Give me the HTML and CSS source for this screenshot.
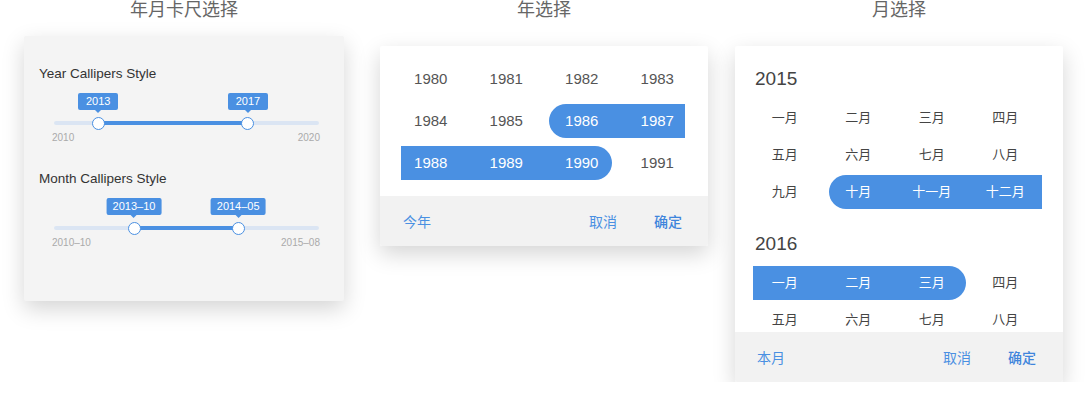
FILE: index.html
```html
<!DOCTYPE html>
<html lang="zh-CN">
<head>
<meta charset="UTF-8">
<meta name="viewport" content="width=device-width, initial-scale=1.0">
<title>年月选择</title>
<link rel="stylesheet" href="styles.css">
</head>
<body>
    <div class="board">
        <!-- 卡尺 -->
        <div class="col col-caliper">
            <h2 class="col-title">年月卡尺选择</h2>
            <div class="card card-caliper">
                <div class="caliper">
                    <div class="caliper-title">Year Callipers Style</div>
                    <div class="caliper-rail">
                        <div class="caliper-track"></div>
                        <div class="caliper-fill" style="left: 16.7%; width: 56.5%"></div>
                        <div class="caliper-tip" style="left: 16.7%">2013</div>
                        <div class="caliper-tip" style="left: 73.2%">2017</div>
                        <div class="caliper-thumb" style="left: 16.7%"></div>
                        <div class="caliper-thumb" style="left: 73.2%"></div>
                    </div>
                    <div class="caliper-ends"><span>2010</span><span>2020</span></div>
                </div>
                <div class="caliper caliper-next">
                    <div class="caliper-title">Month Callipers Style</div>
                    <div class="caliper-rail">
                        <div class="caliper-track"></div>
                        <div class="caliper-fill" style="left: 30.2%; width: 39.3%"></div>
                        <div class="caliper-tip" style="left: 30.2%">2013–10</div>
                        <div class="caliper-tip" style="left: 69.5%">2014–05</div>
                        <div class="caliper-thumb" style="left: 30.2%"></div>
                        <div class="caliper-thumb" style="left: 69.5%"></div>
                    </div>
                    <div class="caliper-ends"><span>2010–10</span><span>2015–08</span></div>
                </div>
            </div>
        </div>

        <!-- 年选择 -->
        <div class="col col-year">
            <h2 class="col-title">年选择</h2>
            <div class="card">
                <div class="years">
                    <div class="cell">1980</div>
                    <div class="cell">1981</div>
                    <div class="cell">1982</div>
                    <div class="cell">1983</div>
                    <div class="cell">1984</div>
                    <div class="cell">1985</div>
                    <div class="cell on cap-start">1986</div>
                    <div class="cell on cut-end">1987</div>
                    <div class="cell on cut-start">1988</div>
                    <div class="cell on">1989</div>
                    <div class="cell on cap-end">1990</div>
                    <div class="cell">1991</div>
                </div>
                <div class="card-foot">
                    <a class="foot-left">今年</a>
                    <div class="foot-actions">
                        <a>取消</a>
                        <a class="ok">确定</a>
                    </div>
                </div>
            </div>
        </div>

        <!-- 月选择 -->
        <div class="col col-month">
            <h2 class="col-title">月选择</h2>
            <div class="card">
                <div class="months-scroll">
                    <div class="month-year">2015</div>
                    <div class="months">
                        <div class="cell">一月</div>
                        <div class="cell">二月</div>
                        <div class="cell">三月</div>
                        <div class="cell">四月</div>
                        <div class="cell">五月</div>
                        <div class="cell">六月</div>
                        <div class="cell">七月</div>
                        <div class="cell">八月</div>
                        <div class="cell">九月</div>
                        <div class="cell on cap-start">十月</div>
                        <div class="cell on">十一月</div>
                        <div class="cell on cut-end">十二月</div>
                    </div>
                    <div class="month-year">2016</div>
                    <div class="months">
                        <div class="cell on cut-start">一月</div>
                        <div class="cell on">二月</div>
                        <div class="cell on cap-end">三月</div>
                        <div class="cell">四月</div>
                        <div class="cell">五月</div>
                        <div class="cell">六月</div>
                        <div class="cell">七月</div>
                        <div class="cell">八月</div>
                    </div>
                </div>
                <div class="card-foot card-foot-month">
                    <a class="foot-left">本月</a>
                    <div class="foot-actions">
                        <a>取消</a>
                        <a class="ok">确定</a>
                    </div>
                </div>
            </div>
        </div>
    </div>
</body>
</html>
```

FILE: styles.css
```css
body {
    margin: 0;
    padding: 0;
    background: #fff;
    font-family: "Liberation Sans", "Noto Sans CJK SC", sans-serif;
    color: #444;
}
.board {
    display: flex;
    align-items: flex-start;
    padding-left: 24px;
}
.col-caliper { width: 320px; }
.col-year { width: 328px; margin-left: 36px; }
.col-month { width: 328px; margin-left: 27px; }

.col-title {
    margin: 0;
    font-size: 18px;
    font-weight: normal;
    line-height: 20px;
    color: #666;
    text-align: center;
}
.col-caliper .col-title { margin-bottom: 16px; }
.col-year .col-title,
.col-month .col-title { margin-bottom: 26px; }

/* cartões */
.card {
    background: #fff;
    border-radius: 2px;
    box-shadow: 0 8px 22px rgba(0, 0, 0, 0.17);
    overflow: hidden;
}
.card-caliper {
    background: #f4f4f4;
    height: 265px;
    box-sizing: border-box;
    padding-top: 30px;
}

/* 卡尺 */
.caliper-next { margin-top: 27px; }
.caliper-title {
    padding-left: 15px;
    font-size: 13.5px;
    line-height: 16px;
    color: #333;
}
.caliper-rail {
    position: relative;
    height: 32px;
    margin: 11px 25px 0 30px;
}
.caliper-track {
    position: absolute;
    left: 0; right: 0; top: 28px;
    height: 4px;
    border-radius: 2px;
    background: #dbe5f3;
}
.caliper-fill {
    position: absolute;
    top: 28px;
    height: 4px;
    background: #4a90e2;
}
.caliper-tip {
    position: absolute;
    top: 0;
    transform: translateX(-50%);
    min-width: 40px;
    box-sizing: border-box;
    padding: 0 6px;
    height: 17px;
    line-height: 17px;
    font-size: 11px;
    color: #fff;
    text-align: center;
    white-space: nowrap;
    background: #4a90e2;
    border-radius: 2px;
}
.caliper-tip::after {
    content: "";
    position: absolute;
    left: 50%;
    top: 17px;
    margin-left: -3px;
    border: 3px solid transparent;
    border-top-color: #4a90e2;
    border-bottom: 0;
}
.caliper-thumb {
    position: absolute;
    top: 23.5px;
    width: 13px;
    height: 13px;
    margin-left: -6.5px;
    box-sizing: border-box;
    border: 1.5px solid #4a90e2;
    border-radius: 50%;
    background: #fff;
}
.caliper-ends {
    display: flex;
    justify-content: space-between;
    margin: 7px 24px 0 28px;
    font-size: 10px;
    line-height: 12px;
    color: #aaa;
}

/* células */
.cell {
    height: 34px;
    line-height: 34px;
    text-align: center;
    white-space: nowrap;
}
.cell.on {
    background: #4a90e2;
    color: #fff;
}
.cap-start { border-radius: 17px 0 0 17px; }
.cap-end { border-radius: 0 17px 17px 0; }

/* 年选择 */
.years {
    display: grid;
    grid-template-columns: repeat(4, 1fr);
    row-gap: 8px;
    padding: 16px 13px;
    font-size: 15px;
    color: #555;
}
.years .cap-start { margin-left: 5px; padding-right: 5px; }
.years .cut-end { margin-right: 10px; padding-left: 10px; }
.years .cut-start { margin-left: 8px; padding-right: 8px; }
.years .cap-end { margin-right: 8px; padding-left: 8px; }

/* 月选择 */
.months-scroll {
    height: 286px;
    box-sizing: border-box;
    padding: 20px 21px 0 13px;
    overflow: hidden;
}
.month-year {
    padding-left: 7px;
    font-size: 19px;
    line-height: 26px;
    color: #444;
}
.months {
    display: grid;
    grid-template-columns: repeat(4, 1fr);
    row-gap: 3px;
    margin: 9px 0 22px;
    font-size: 13px;
    color: #444;
}
.months .cap-start { margin-left: 7px; padding-right: 7px; }
.months .cut-start { margin-left: 5px; padding-right: 5px; }
.months .cap-end { margin-right: 3px; padding-left: 3px; }

/* rodapé */
.card-foot {
    display: flex;
    align-items: center;
    height: 50px;
    padding: 0 26px 0 23px;
    background: #f2f2f2;
    font-size: 14px;
    color: #4a90e2;
}
.card-foot-month { padding: 0 27px 0 22px; }
.card-foot a { cursor: pointer; }
.foot-left { margin-right: auto; }
.foot-actions {
    display: flex;
    gap: 37px;
}
.foot-actions .ok {
    font-weight: 500;
    color: #3f85dc;
}
```
